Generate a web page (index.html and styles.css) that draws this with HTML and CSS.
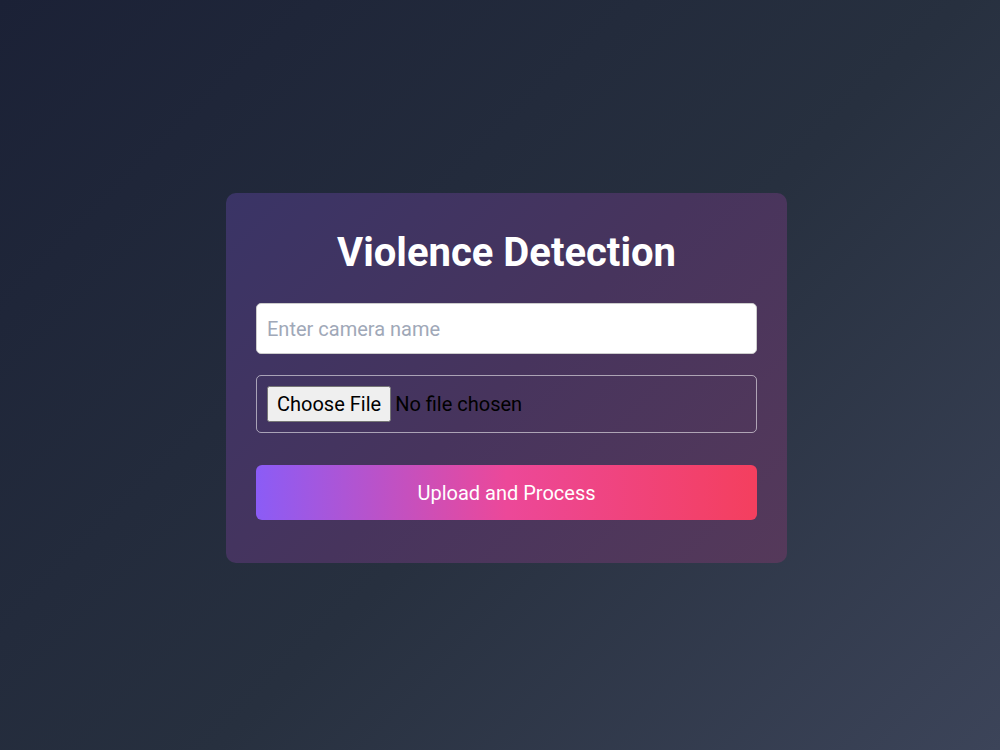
FILE: index.html
```html
<!DOCTYPE html>
<html lang="en">

<head>
    <meta charset="UTF-8" />
    <title>Violence Detection</title>
    <link rel="stylesheet" href="styles.css">
</head>

<body>
    <div class="upload-container">
        <h1>Violence Detection</h1>
        <form id="uploadForm">
            <input type="text" id="cameraName" placeholder="Enter camera name" />
            <input type="file" id="videoFile" accept="video/*" />
            <button type="submit" class="btn-upload">Upload and Process</button>
        </form>
    </div>
</body>

</html>
```
FILE: styles.css
```css
body {
    margin: 0;
    padding: 6px 0 0 13px;
    box-sizing: border-box;
    min-height: 100vh;
    display: flex;
    align-items: center;
    justify-content: center;
    font-family: Roboto, "Liberation Sans", sans-serif;
    font-size: 20px;
    background: linear-gradient(135deg, #1b2136 0%, #27303f 55%, #3c4459 100%);
}

.upload-container {
    width: 501px;
    padding: 30px 30px 43px;
    border-radius: 10px;
    background: linear-gradient(135deg, #3a3466 0%, #47345d 50%, #55395a 100%);
    text-align: center;
}

.upload-container h1 {
    margin: 0 0 20px;
    color: #fff;
    font-size: 40px;
    font-weight: 700;
    line-height: 60px;
}

form {
    display: flex;
    flex-direction: column;
}

input[type="text"] {
    height: 51px;
    box-sizing: border-box;
    padding: 0 10px;
    font-family: inherit;
    font-size: 20px;
    border: 1px solid #ccc;
    border-radius: 5px;
    background: #fff;
    margin-bottom: 21px;
}

input[type="text"]::placeholder {
    color: #a0a8b8;
}

input[type="file"] {
    box-sizing: border-box;
    padding: 10px;
    font-family: inherit;
    font-size: 20px;
    color: #000;
    text-align: left;
    border: 1px solid rgba(255, 255, 255, 0.55);
    border-radius: 5px;
    margin-bottom: 32px;
}

input[type="file"]::file-selector-button {
    font-family: inherit;
    font-size: 20px;
    padding: 4px 8px;
    margin-right: 4px;
}

.btn-upload {
    height: 55px;
    border: none;
    border-radius: 6px;
    background: linear-gradient(90deg, #8b5cf6 0%, #ec4899 50%, #f43f5e 100%);
    color: #fff;
    font-family: inherit;
    font-size: 20px;
    cursor: pointer;
}
```
